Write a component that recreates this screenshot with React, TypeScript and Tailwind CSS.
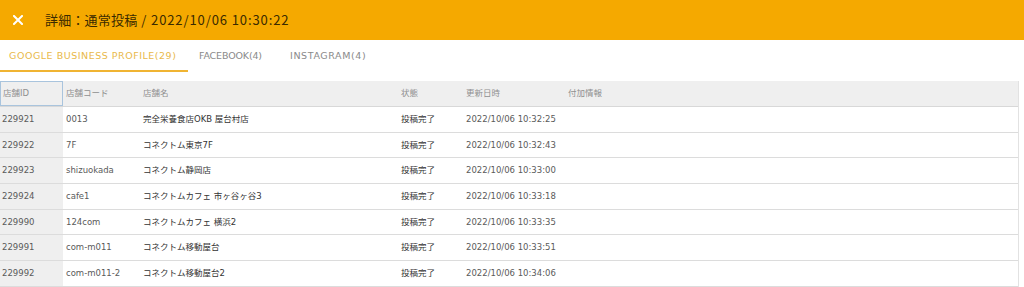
import React from "react";

const rows = [
  ["229921", "0013", "完全栄養食店OKB 屋台村店", "投稿完了", "2022/10/06 10:32:25"],
  ["229922", "7F", "コネクトム東京7F", "投稿完了", "2022/10/06 10:32:43"],
  ["229923", "shizuokada", "コネクトム静岡店", "投稿完了", "2022/10/06 10:33:00"],
  ["229924", "cafe1", "コネクトムカフェ 市ヶ谷ヶ谷3", "投稿完了", "2022/10/06 10:33:18"],
  ["229990", "124com", "コネクトムカフェ 横浜2", "投稿完了", "2022/10/06 10:33:35"],
  ["229991", "com-m011", "コネクトム移動屋台", "投稿完了", "2022/10/06 10:33:51"],
  ["229992", "com-m011-2", "コネクトム移動屋台2", "投稿完了", "2022/10/06 10:34:06"],
];

const font = { fontFamily: '"DejaVu Sans", "Noto Sans CJK JP", sans-serif' };

export default function App() {
  return (
    <div className="w-[1024px] h-[287px] overflow-hidden bg-white" style={font}>
      <div className="h-10 bg-[#f5a900] flex items-center">
        <svg width="10" height="10" viewBox="0 0 10 10" className="ml-[13px]">
          <path d="M1 1L9 9M9 1L1 9" stroke="white" strokeWidth="2" strokeLinecap="square" />
        </svg>
        <span
          className="ml-[22px] text-[13px] text-[#3a2a00] tracking-[0.2px]"
          style={{ fontFamily: '"Noto Sans CJK JP", sans-serif' }}
        >
          詳細：通常投稿<span className="tracking-[0.9px]"> / 2022/10/06 10:30:22</span>
        </span>
      </div>
      <div className="flex h-[32px] items-stretch text-[9.5px] whitespace-nowrap">
        <div className="w-[188px] flex items-center pl-[9px] border-b-2 border-[#f0b432] text-[#e9b94a] pt-[2px] tracking-[0.52px]">
          GOOGLE BUSINESS PROFILE(29)
        </div>
        <div className="w-[102px] flex items-center pl-[11px] text-[#8a8a8a] pt-[2px] pb-[2px] tracking-[-0.15px]">FACEBOOK(4)</div>
        <div className="w-[96px] flex items-center text-[#8a8a8a] pt-[2px] pb-[2px] tracking-[0.6px]">INSTAGRAM(4)</div>
      </div>
      <div className="mt-[9px] w-[1019px] border-r border-[#e2e2e2] text-[8.5px] text-[#5a5a5a]">
        <div className="flex h-[26px] bg-[#efefef] border-b border-[#d8d8d8] text-[#8f8f8f]">
          <div className="w-[63px] border border-[#a9c4dd] pl-[2px] flex items-center">店舗ID</div>
          <div className="w-[77px] pl-[3px] flex items-center">店舗コード</div>
          <div className="w-[258px] pl-[3px] flex items-center">店舗名</div>
          <div className="w-[65px] pl-[3px] flex items-center">状態</div>
          <div className="w-[102px] pl-[3px] flex items-center">更新日時</div>
          <div className="flex-1 pl-[3px] flex items-center">付加情報</div>
        </div>
        {rows.map((r) => (
          <div key={r[0]} className="flex h-[25.67px] border-b border-[#dcdcdc]">
            <div className="w-[63px] bg-[#efefef] pl-[2px] flex items-center">{r[0]}</div>
            <div className="w-[77px] pl-[3px] flex items-center">{r[1]}</div>
            <div className="w-[258px] pl-[3px] flex items-center text-[#333]">{r[2]}</div>
            <div className="w-[65px] pl-[3px] flex items-center text-[#333]">{r[3]}</div>
            <div className="w-[102px] pl-[3px] flex items-center">{r[4]}</div>
            <div className="flex-1"></div>
          </div>
        ))}
      </div>
    </div>
  );
}
